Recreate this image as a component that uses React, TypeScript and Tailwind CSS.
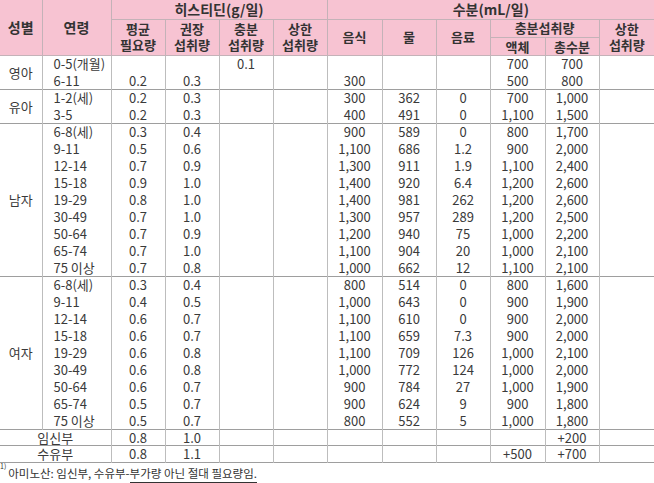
import React from 'react';

type Row = {
  age: string;
  h: [string, string, string, string];
  w: [string, string, string, string, string, string];
};

type Group = { sex: string; rows: Row[] };

const groups: Group[] = [
  {
    sex: '영아',
    rows: [
      { age: '0-5(개월)', h: ['', '', '0.1', ''], w: ['', '', '', '700', '700', ''] },
      { age: '6-11', h: ['0.2', '0.3', '', ''], w: ['300', '', '', '500', '800', ''] },
    ],
  },
  {
    sex: '유아',
    rows: [
      { age: '1-2(세)', h: ['0.2', '0.3', '', ''], w: ['300', '362', '0', '700', '1,000', ''] },
      { age: '3-5', h: ['0.2', '0.3', '', ''], w: ['400', '491', '0', '1,100', '1,500', ''] },
    ],
  },
  {
    sex: '남자',
    rows: [
      { age: '6-8(세)', h: ['0.3', '0.4', '', ''], w: ['900', '589', '0', '800', '1,700', ''] },
      { age: '9-11', h: ['0.5', '0.6', '', ''], w: ['1,100', '686', '1.2', '900', '2,000', ''] },
      { age: '12-14', h: ['0.7', '0.9', '', ''], w: ['1,300', '911', '1.9', '1,100', '2,400', ''] },
      { age: '15-18', h: ['0.9', '1.0', '', ''], w: ['1,400', '920', '6.4', '1,200', '2,600', ''] },
      { age: '19-29', h: ['0.8', '1.0', '', ''], w: ['1,400', '981', '262', '1,200', '2,600', ''] },
      { age: '30-49', h: ['0.7', '1.0', '', ''], w: ['1,300', '957', '289', '1,200', '2,500', ''] },
      { age: '50-64', h: ['0.7', '0.9', '', ''], w: ['1,200', '940', '75', '1,000', '2,200', ''] },
      { age: '65-74', h: ['0.7', '1.0', '', ''], w: ['1,100', '904', '20', '1,000', '2,100', ''] },
      { age: '75 이상', h: ['0.7', '0.8', '', ''], w: ['1,000', '662', '12', '1,100', '2,100', ''] },
    ],
  },
  {
    sex: '여자',
    rows: [
      { age: '6-8(세)', h: ['0.3', '0.4', '', ''], w: ['800', '514', '0', '800', '1,600', ''] },
      { age: '9-11', h: ['0.4', '0.5', '', ''], w: ['1,000', '643', '0', '900', '1,900', ''] },
      { age: '12-14', h: ['0.6', '0.7', '', ''], w: ['1,100', '610', '0', '900', '2,000', ''] },
      { age: '15-18', h: ['0.6', '0.7', '', ''], w: ['1,100', '659', '7.3', '900', '2,000', ''] },
      { age: '19-29', h: ['0.6', '0.8', '', ''], w: ['1,100', '709', '126', '1,000', '2,100', ''] },
      { age: '30-49', h: ['0.6', '0.8', '', ''], w: ['1,000', '772', '124', '1,000', '2,000', ''] },
      { age: '50-64', h: ['0.6', '0.7', '', ''], w: ['900', '784', '27', '1,000', '1,900', ''] },
      { age: '65-74', h: ['0.5', '0.7', '', ''], w: ['900', '624', '9', '900', '1,800', ''] },
      { age: '75 이상', h: ['0.5', '0.7', '', ''], w: ['800', '552', '5', '1,000', '1,800', ''] },
    ],
  },
];

const special: { label: string; h: string[]; w: string[] }[] = [
  { label: '임신부', h: ['0.8', '1.0', '', ''], w: ['', '', '', '', '+200', ''] },
  { label: '수유부', h: ['0.8', '1.1', '', ''], w: ['', '', '', '+500', '+700', ''] },
];

const th = 'border-r border-b border-[#c4b2b8] font-semibold text-[#333] text-center align-middle';
const td = 'border-r border-[#bdbdbd] text-center align-middle';

function ValueCells({ values }: { values: string[] }) {
  return (
    <>
      {values.map((v, i) => (
        <td key={i} className={td}>
          {v}
        </td>
      ))}
    </>
  );
}

export default function App() {
  return (
    <div className="w-[654px] h-[483px] bg-white font-['Noto_Sans_CJK_KR',sans-serif] text-[#3a3a3a]">
      <table className="w-[654px] table-fixed border-collapse text-[13px] leading-[15px]">
        <colgroup>
          <col className="w-[42px]" />
          <col className="w-[69px]" />
          <col className="w-[54px]" />
          <col className="w-[54px]" />
          <col className="w-[54px]" />
          <col className="w-[54px]" />
          <col className="w-[55px]" />
          <col className="w-[54px]" />
          <col className="w-[54px]" />
          <col className="w-[55px]" />
          <col className="w-[54px]" />
          <col className="w-[55px]" />
        </colgroup>
        <thead className="bg-[#f7c3d2] border-b border-[#9e9e9e]">
          <tr className="h-[19px]">
            <th rowSpan={3} className={`${th} text-[14px]`}>성별</th>
            <th rowSpan={3} className={`${th} text-[14px]`}>연령</th>
            <th colSpan={4} className={`${th} text-[14px] leading-[17px]`}>히스티딘(g/일)</th>
            <th colSpan={6} className={`${th} text-[14px] leading-[17px] border-r-0`}>수분(mL/일)</th>
          </tr>
          <tr className="h-[18px] leading-[16px]">
            <th rowSpan={2} className={th}>평균<br />필요량</th>
            <th rowSpan={2} className={th}>권장<br />섭취량</th>
            <th rowSpan={2} className={th}>충분<br />섭취량</th>
            <th rowSpan={2} className={th}>상한<br />섭취량</th>
            <th rowSpan={2} className={th}>음식</th>
            <th rowSpan={2} className={th}>물</th>
            <th rowSpan={2} className={th}>음료</th>
            <th colSpan={2} className={th}>충분섭취량</th>
            <th rowSpan={2} className={`${th} border-r-0`}>상한<br />섭취량</th>
          </tr>
          <tr className="h-[18px]">
            <th className={th}>액체</th>
            <th className={th}>총수분</th>
          </tr>
        </thead>
        {groups.map((g) => (
          <tbody key={g.sex} className="border-b border-[#9e9e9e]">
            {g.rows.map((r, i) => (
              <tr key={r.age} className="h-[17px]">
                {i === 0 && (
                  <td rowSpan={g.rows.length} className={td}>
                    {g.sex}
                  </td>
                )}
                <td className={`${td} text-left pl-[11px]`}>{r.age}</td>
                <ValueCells values={[...r.h, ...r.w]} />
              </tr>
            ))}
          </tbody>
        ))}
        {special.map((s) => (
          <tbody key={s.label} className="border-b border-[#9e9e9e]">
            <tr className="h-[16.5px]">
              <td colSpan={2} className={td}>
                {s.label}
              </td>
              <ValueCells values={[...s.h, ...s.w]} />
            </tr>
          </tbody>
        ))}
      </table>
      <p className="pt-[2px] text-[11.5px] leading-[17px] text-[#333]">
        <sup className="text-[7px] align-top leading-[10px]">1)</sup>
        <span className="ml-[2px]">아미노산: 임신부, 수유부-</span>
        <span className="border-b border-[#333] pb-[1px]">부가량 아닌 절대 필요량임.</span>
      </p>
    </div>
  );
}
